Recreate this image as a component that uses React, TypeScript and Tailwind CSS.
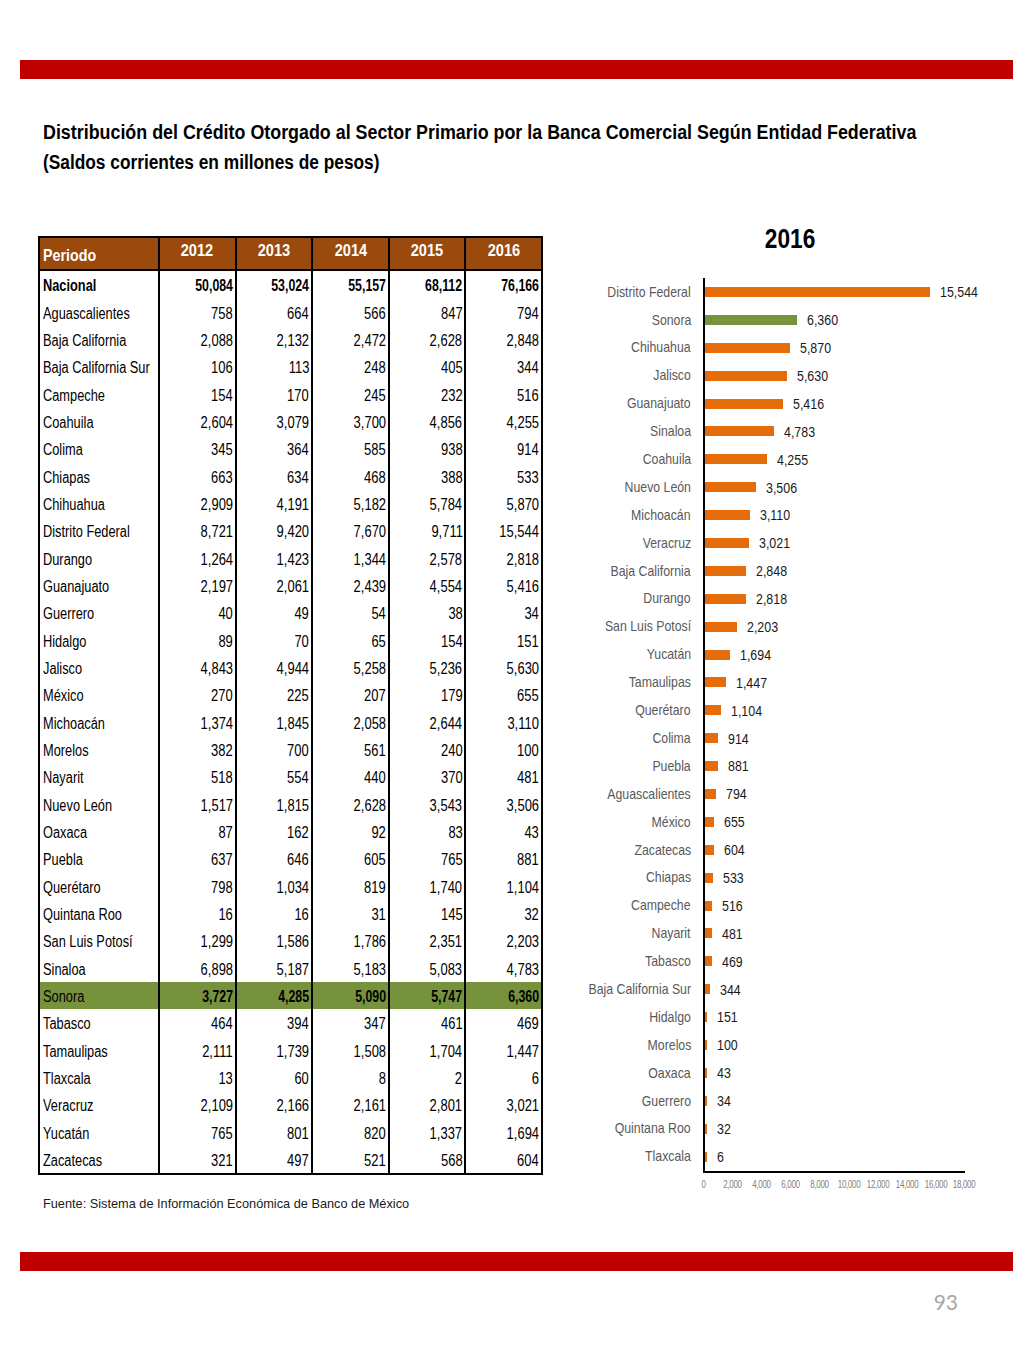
import React from "react";

type Row = { name: string; v: string[]; bold?: boolean; hl?: boolean };

const rows: Row[] = [
  { name: "Nacional", v: ["50,084", "53,024", "55,157", "68,112", "76,166"], bold: true },
  { name: "Aguascalientes", v: ["758", "664", "566", "847", "794"] },
  { name: "Baja California", v: ["2,088", "2,132", "2,472", "2,628", "2,848"] },
  { name: "Baja California Sur", v: ["106", "113", "248", "405", "344"] },
  { name: "Campeche", v: ["154", "170", "245", "232", "516"] },
  { name: "Coahuila", v: ["2,604", "3,079", "3,700", "4,856", "4,255"] },
  { name: "Colima", v: ["345", "364", "585", "938", "914"] },
  { name: "Chiapas", v: ["663", "634", "468", "388", "533"] },
  { name: "Chihuahua", v: ["2,909", "4,191", "5,182", "5,784", "5,870"] },
  { name: "Distrito Federal", v: ["8,721", "9,420", "7,670", "9,711", "15,544"] },
  { name: "Durango", v: ["1,264", "1,423", "1,344", "2,578", "2,818"] },
  { name: "Guanajuato", v: ["2,197", "2,061", "2,439", "4,554", "5,416"] },
  { name: "Guerrero", v: ["40", "49", "54", "38", "34"] },
  { name: "Hidalgo", v: ["89", "70", "65", "154", "151"] },
  { name: "Jalisco", v: ["4,843", "4,944", "5,258", "5,236", "5,630"] },
  { name: "México", v: ["270", "225", "207", "179", "655"] },
  { name: "Michoacán", v: ["1,374", "1,845", "2,058", "2,644", "3,110"] },
  { name: "Morelos", v: ["382", "700", "561", "240", "100"] },
  { name: "Nayarit", v: ["518", "554", "440", "370", "481"] },
  { name: "Nuevo León", v: ["1,517", "1,815", "2,628", "3,543", "3,506"] },
  { name: "Oaxaca", v: ["87", "162", "92", "83", "43"] },
  { name: "Puebla", v: ["637", "646", "605", "765", "881"] },
  { name: "Querétaro", v: ["798", "1,034", "819", "1,740", "1,104"] },
  { name: "Quintana Roo", v: ["16", "16", "31", "145", "32"] },
  { name: "San Luis Potosí", v: ["1,299", "1,586", "1,786", "2,351", "2,203"] },
  { name: "Sinaloa", v: ["6,898", "5,187", "5,183", "5,083", "4,783"] },
  { name: "Sonora", v: ["3,727", "4,285", "5,090", "5,747", "6,360"], bold: true, hl: true },
  { name: "Tabasco", v: ["464", "394", "347", "461", "469"] },
  { name: "Tamaulipas", v: ["2,111", "1,739", "1,508", "1,704", "1,447"] },
  { name: "Tlaxcala", v: ["13", "60", "8", "2", "6"] },
  { name: "Veracruz", v: ["2,109", "2,166", "2,161", "2,801", "3,021"] },
  { name: "Yucatán", v: ["765", "801", "820", "1,337", "1,694"] },
  { name: "Zacatecas", v: ["321", "497", "521", "568", "604"] },
];

const chart: [string, number][] = [
  ["Distrito Federal", 15544],
  ["Sonora", 6360],
  ["Chihuahua", 5870],
  ["Jalisco", 5630],
  ["Guanajuato", 5416],
  ["Sinaloa", 4783],
  ["Coahuila", 4255],
  ["Nuevo León", 3506],
  ["Michoacán", 3110],
  ["Veracruz", 3021],
  ["Baja California", 2848],
  ["Durango", 2818],
  ["San Luis Potosí", 2203],
  ["Yucatán", 1694],
  ["Tamaulipas", 1447],
  ["Querétaro", 1104],
  ["Colima", 914],
  ["Puebla", 881],
  ["Aguascalientes", 794],
  ["México", 655],
  ["Zacatecas", 604],
  ["Chiapas", 533],
  ["Campeche", 516],
  ["Nayarit", 481],
  ["Tabasco", 469],
  ["Baja California Sur", 344],
  ["Hidalgo", 151],
  ["Morelos", 100],
  ["Oaxaca", 43],
  ["Guerrero", 34],
  ["Quintana Roo", 32],
  ["Tlaxcala", 6],
];

const ticks = ["0", "2,000", "4,000", "6,000", "8,000", "10,000", "12,000", "14,000", "16,000", "18,000"];

const fmt = (n: number) => n.toLocaleString("en-US");

export default function App() {
  return (
    <div className="w-[1024px] h-[1365px] bg-white font-['Liberation_Sans',Arial,sans-serif] text-black overflow-hidden">
      <div className="pt-[60px]">
        <div className="ml-[20px] w-[993px] h-[19px] bg-[#c00000]" />
      </div>

      <div className="ml-[43px] mt-[41px] text-[20px] leading-[24px] font-bold text-black">
        <span className="inline-block whitespace-nowrap origin-left scale-x-[0.893]">
          Distribución del Crédito Otorgado al Sector Primario por la Banca Comercial Según Entidad Federativa
        </span>
      </div>
      <div className="ml-[43px] mt-[6px] text-[20px] leading-[24px] font-bold text-black">
        <span className="inline-block whitespace-nowrap origin-left scale-x-[0.865]">
          (Saldos corrientes en millones de pesos)
        </span>
      </div>

      <div className="flex items-start mt-[51px]">
        {/* Table + source */}
        <div className="ml-[38px] mt-[11px] w-[505px]">
          <div className="border-2 border-black">
            <div className="flex h-[33px] bg-[#9a4a0c] text-white font-bold border-b-2 border-black">
              <div className="w-[120px] border-r-2 border-black flex items-end pb-[3px] pl-[3px] text-[17px] leading-[20px]">
                <span className="inline-block whitespace-nowrap origin-left scale-x-[0.84]">Periodo</span>
              </div>
              {["2012", "2013", "2014", "2015", "2016"].map((y, i) => (
                <div
                  key={y}
                  className={`flex-1 flex items-start justify-center pt-[3px] text-[17px] leading-[20px] ${i < 4 ? "border-r-2 border-black" : ""}`}
                >
                  <span className="inline-block whitespace-nowrap scale-x-[0.86]">{y}</span>
                </div>
              ))}
            </div>
            {rows.map((r) => (
              <div
                key={r.name}
                className={`flex h-[27.33px] text-[16px] leading-[18px] ${r.hl ? "bg-[#76923c]" : ""}`}
              >
                <div
                  className={`w-[120px] border-r-2 border-black flex items-end pb-[3px] pl-[3px] ${r.bold && !r.hl ? "font-bold" : ""}`}
                >
                  <span className="inline-block whitespace-nowrap origin-left scale-x-[0.8]">{r.name}</span>
                </div>
                {r.v.map((v, i) => (
                  <div
                    key={i}
                    className={`flex-1 flex items-end justify-end pb-[3px] pr-[2px] ${r.bold ? "font-bold" : ""} ${i < 4 ? "border-r-2 border-black" : ""}`}
                  >
                    <span
                      className={`inline-block whitespace-nowrap origin-right ${r.bold ? "scale-x-[0.77]" : "scale-x-[0.81]"}`}
                    >
                      {v}
                    </span>
                  </div>
                ))}
              </div>
            ))}
          </div>
          <div className="ml-[5px] mt-[21px] text-[13px] leading-[16px] text-[#1a1a1a]">
            <span className="inline-block whitespace-nowrap origin-left scale-x-[0.98]">
              Fuente: Sistema de Información Económica de Banco de México
            </span>
          </div>
        </div>

        {/* Chart */}
        <div className="ml-[37px] w-[420px]">
          <div className="h-[28px] text-center text-[27px] leading-[28px] font-bold">
            <span className="inline-block whitespace-nowrap scale-x-[0.84]">2016</span>
          </div>
          <div className="flex mt-[25px]">
            <div className="w-[111px] flex flex-col">
              {chart.map(([n]) => (
                <div
                  key={n}
                  className="h-[27.9px] flex items-center justify-end text-[15px] text-[#595959]"
                >
                  <span className="inline-block whitespace-nowrap origin-right scale-x-[0.82]">{n}</span>
                </div>
              ))}
            </div>
            <div className="ml-[12px] w-[262px] border-l-2 border-b-2 border-black flex flex-col">
              {chart.map(([n, v]) => (
                <div key={n} className="h-[27.9px] flex items-center">
                  <div
                    className={`h-[10px] shrink-0 ${n === "Sonora" ? "bg-[#77933c]" : "bg-[#e46c0a]"}`}
                    style={{ width: Math.max(v * 0.01448, 2) }}
                  />
                  <div className="ml-[10px] shrink-0 text-[15.5px] text-[#1a1a1a]">
                    <span className="inline-block whitespace-nowrap origin-left scale-x-[0.8]">{fmt(v)}</span>
                  </div>
                </div>
              ))}
            </div>
          </div>
          <div className="flex ml-[109.5px] mt-[6px]">
            {ticks.map((t) => (
              <div
                key={t}
                className="w-[28.96px] shrink-0 flex justify-center text-[10px] leading-[12px] text-[#7f7f7f]"
              >
                <span className="inline-block whitespace-nowrap scale-x-[0.8] tracking-[-0.4px]">{t}</span>
              </div>
            ))}
          </div>
        </div>
      </div>

      <div className="mt-[40px] ml-[20px] w-[993px] h-[19px] bg-[#c00000]" />

      <div className="mt-[17px] w-[958px] text-right text-[21px] leading-[28px] text-[#a6a6a6] font-['Lato',sans-serif]">
        93
      </div>
    </div>
  );
}
